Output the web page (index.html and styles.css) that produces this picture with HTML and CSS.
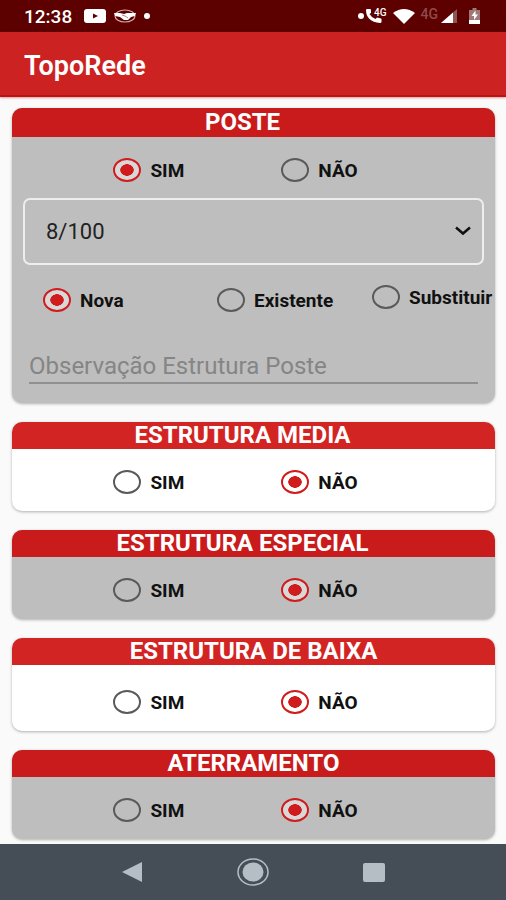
FILE: index.html
```
<!DOCTYPE html>
<html lang="pt-BR">
<head>
  <meta charset="UTF-8">
  <meta name="viewport" content="width=device-width, initial-scale=1.0">
  <title>TopoRede</title>
  <link rel="stylesheet" href="styles.css">
</head>
<body>
  <div class="status">
    <div class="status-left">
      <span class="clock">12:38</span>
      <svg width="22" height="14" viewBox="0 0 22 14">
        <rect width="22" height="14" rx="3" fill="#fff"/>
        <path d="M9 4.500l5 2.500-5 2.500z" fill="#5c0000"/>
      </svg>
      <svg width="22" height="14" viewBox="0 0 22 14">
        <ellipse cx="11" cy="7" rx="10" ry="6" fill="none" stroke="#d8a8a8" stroke-width="1.2"/>
        <path d="M0 4l6 0 4 1 3-1 9 0-1 3-4 1-3 3-4 0-4-3-5-1z" fill="#fff"/>
        <path d="M8 6l3 1 3 2" fill="none" stroke="#a06060" stroke-width="0.8"/>
      </svg>
      <svg width="6" height="6" viewBox="0 0 6 6"><circle cx="3" cy="3" r="3" fill="#fff"/></svg>
    </div>
    <div class="status-right">
      <svg width="6" height="6" viewBox="0 0 6 6"><circle cx="3" cy="3" r="3" fill="#fff"/></svg>
      <span class="call">
        <svg width="16" height="14" viewBox="0 0 16 14">
          <path d="M0 1Q0 0 1 0H4Q5 0 5 1L5 4 3.500 5Q5.500 8.500 9.500 10L11 8.500 15 9.500Q16 10 15.500 11V13Q15.500 14 14 14Q0 12.500 0 1z" fill="#fff"/>
        </svg>
        <span class="call-net">4G</span>
      </span>
      <svg class="wifi" width="22" height="15" viewBox="0 0 22 15">
        <path d="M0 4Q11-4 22 4L11 15z" fill="#fff"/>
      </svg>
      <span class="net">4G</span>
      <svg class="signal" width="16" height="14" viewBox="0 0 16 14">
        <path d="M16 0V14H0z" fill="#8d5555"/>
        <path d="M12 3.500V14H0z" fill="#fff"/>
      </svg>
      <svg width="11" height="16" viewBox="0 0 11 16">
        <path d="M3.500 0h4v2H11V12H0V2h3.500z" fill="#a07878"/>
        <path d="M0 12h11v4H0z" fill="#fff"/>
        <path d="M6.500 2.500L2.500 8H5v4l4-5.500H6.500z" fill="#fff"/>
      </svg>
    </div>
  </div>

  <header class="appbar">
    <h1>TopoRede</h1>
  </header>

  <main>
    <section class="card gray main-card">
      <h2 class="shifted">POSTE</h2>
      <div class="options">
        <label><input type="radio" name="poste" checked>SIM</label>
        <label><input type="radio" name="poste">NÃO</label>
      </div>
      <div class="select-box">
        <select aria-label="Tipo de poste">
          <option>8/100</option>
        </select>
        <svg width="18" height="10" viewBox="0 0 18 10">
          <path d="M2 1.500l7 6 7-6" fill="none" stroke="#111" stroke-width="2.500"/>
        </svg>
      </div>
      <div class="states">
        <label><input type="radio" name="estado" checked>Nova</label>
        <label><input type="radio" name="estado">Existente</label>
        <label><input type="radio" name="estado">Substituir</label>
      </div>
      <input class="note" type="text" aria-label="Observação Estrutura Poste" placeholder="Observação Estrutura Poste">
    </section>

    <section class="card">
      <h2 class="shifted">ESTRUTURA MEDIA</h2>
      <div class="options">
        <label><input type="radio" name="media">SIM</label>
        <label><input type="radio" name="media" checked>NÃO</label>
      </div>
    </section>

    <section class="card gray">
      <h2 class="shifted">ESTRUTURA ESPECIAL</h2>
      <div class="options">
        <label><input type="radio" name="especial">SIM</label>
        <label><input type="radio" name="especial" checked>NÃO</label>
      </div>
    </section>

    <section class="card roomy">
      <h2>ESTRUTURA DE BAIXA</h2>
      <div class="options">
        <label><input type="radio" name="baixa">SIM</label>
        <label><input type="radio" name="baixa" checked>NÃO</label>
      </div>
    </section>

    <section class="card gray">
      <h2>ATERRAMENTO</h2>
      <div class="options">
        <label><input type="radio" name="aterramento">SIM</label>
        <label><input type="radio" name="aterramento" checked>NÃO</label>
      </div>
    </section>
  </main>

  <nav class="navbar">
    <button type="button" aria-label="Voltar">
      <svg width="22" height="20" viewBox="0 0 22 20"><path d="M1 10L21 0V20z" fill="#b5bec4"/></svg>
    </button>
    <button type="button" aria-label="Início">
      <svg width="32" height="28" viewBox="0 0 32 28">
        <ellipse cx="16" cy="14" rx="15" ry="13" fill="none" stroke="#b5bec4" stroke-width="1.500"/>
        <ellipse cx="16" cy="14" rx="10.500" ry="9.500" fill="#b5bec4"/>
      </svg>
    </button>
    <button type="button" aria-label="Recentes">
      <svg width="22" height="19" viewBox="0 0 22 19"><rect width="22" height="19" rx="2" fill="#b5bec4"/></svg>
    </button>
  </nav>
</body>
</html>
```
FILE: styles.css
```
* {
  box-sizing: border-box;
}
body {
  margin: 0;
  min-height: 100vh;
  display: flex;
  flex-direction: column;
  background: #fafafa;
  color: #111;
  font-family: Roboto, "Liberation Sans", sans-serif;
}
svg {
  display: block;
  flex: none;
}

/* status bar */
.status {
  display: flex;
  justify-content: space-between;
  align-items: center;
  height: 32px;
  padding: 0 26px 0 24px;
  background: #5c0000;
  color: #fff;
}
.status-left,
.status-right {
  display: flex;
  align-items: center;
}
.status-left {
  gap: 8px;
}
.clock {
  margin-right: 4px;
  font-size: 19px;
  font-weight: 500;
}
.call {
  display: flex;
  margin-left: 2px;
}
.call-net {
  margin-left: -8px;
  font-size: 10px;
  line-height: 8px;
  font-weight: 500;
}
.wifi {
  margin-left: 6px;
}
.net {
  margin: -4px 3px 0 6px;
  color: #8f4a4a;
  font-size: 14px;
  font-weight: 500;
}
.signal {
  margin-right: 12px;
}

.appbar {
  padding: 19px 24px 14px;
  background: #cd2222;
  border-bottom: 2px solid #b81414;
  box-shadow: 0 1px 2px rgba(200, 60, 60, 0.5);
  color: #fff;
}
.appbar h1 {
  margin: 0;
  font-size: 27px;
  line-height: 30px;
  font-weight: 600;
}

/* cards */
main {
  flex: 1;
  display: flex;
  flex-direction: column;
  gap: 19px;
  padding: 11px 11px 3px 12px;
}
.card {
  border-radius: 10px;
  overflow: hidden;
  background: #fff;
  box-shadow: 0 1px 3px rgba(0, 0, 0, 0.3);
}
.card h2 {
  margin: 0;
  background: #d32424;
  color: #fff;
  font-size: 24px;
  line-height: 27px;
  font-weight: 700;
  text-align: center;
}
.card .shifted {
  padding-right: 22px;
}
.gray {
  background: #bebebe;
}
.gray h2 {
  background: #c91b1b;
}
.main-card h2 {
  line-height: 29px;
}
.options {
  display: grid;
  grid-template-columns: 44% 1fr;
  padding: 21px 0 17px 21%;
}
.main-card .options {
  padding-bottom: 16px;
}
.roomy .options {
  padding-top: 25px;
}
label {
  display: flex;
  align-items: center;
  gap: 9px;
  height: 24px;
  font-size: 19px;
  font-weight: 700;
}
input[type="radio"] {
  appearance: none;
  flex: none;
  width: 28px;
  height: 24px;
  margin: 0;
  border: 2px solid #5a5a5a;
  border-radius: 50%;
}
input[type="radio"]:checked {
  border-color: #d01c1c;
  background: radial-gradient(7px 6px, #d01c1c 92%, rgba(255, 255, 255, 0.4) 100%);
}

.select-box {
  position: relative;
  margin: 0 11px;
}
.select-box select {
  appearance: none;
  display: block;
  width: 100%;
  height: 67px;
  padding: 0 40px 0 21px;
  border: 2px solid #eee;
  border-radius: 7px;
  background: none;
  color: #222;
  font: 22px Roboto, "Liberation Sans", sans-serif;
}
.select-box svg {
  position: absolute;
  top: 28px;
  right: 12px;
  pointer-events: none;
}
.states {
  display: grid;
  grid-template-columns: 174fr 155fr 123fr;
  padding: 23px 0 0 31px;
}
.states label:last-child {
  margin-top: -3px;
}
.note {
  display: block;
  width: calc(100% - 34px);
  height: 34px;
  margin: 38px 17px 19px;
  padding: 0;
  border: 0;
  border-bottom: 2px solid #919191;
  background: none;
  font: 24px Roboto, "Liberation Sans", sans-serif;
}
.note::placeholder {
  color: #858585;
}

.navbar {
  display: flex;
  justify-content: center;
  align-items: center;
  gap: 89px;
  height: 56px;
  background: #454e56;
}
.navbar button {
  display: flex;
  justify-content: center;
  width: 32px;
  padding: 0;
  border: 0;
  background: none;
}
```
